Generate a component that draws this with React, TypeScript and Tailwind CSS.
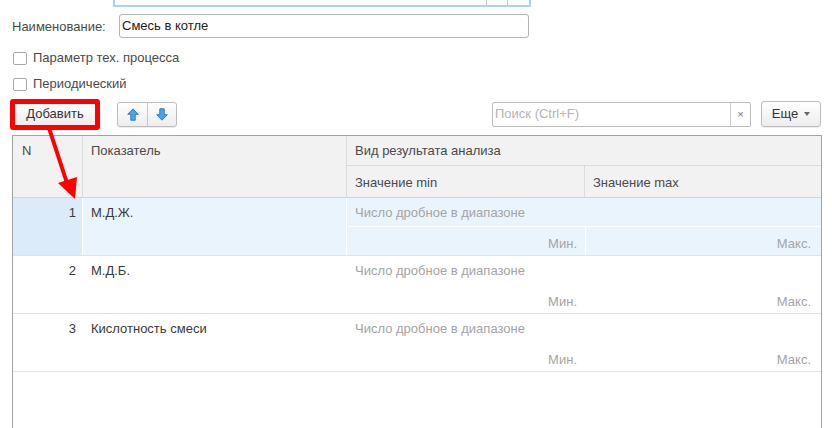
import React from 'react';

const font = { fontFamily: '"Liberation Sans", Arial, sans-serif' };

function Arrow({ down = false }: { down?: boolean }) {
  return (
    <svg width="12" height="13" viewBox="0 0 12 13" className={down ? 'rotate-180' : ''}>
      <path
        d="M6 0.8 L11.3 6.3 L8.2 6.3 L8.2 12.2 L3.8 12.2 L3.8 6.3 L0.7 6.3 Z"
        fill="#4ba4ea"
        stroke="#2b7fc4"
        strokeWidth="1"
        strokeLinejoin="round"
      />
    </svg>
  );
}

function Checkbox({ label }: { label: string }) {
  return (
    <div className="flex items-center h-[26px] pl-[13px]">
      <span className="w-[14px] h-[13px] border border-[#a9a9a9] rounded-[2px] bg-white" />
      <span className="ml-[6px] text-[13px] text-[#4a4a4a]">{label}</span>
    </div>
  );
}

type Row = { n: number; name: string; selected?: boolean };

const rows: Row[] = [
  { n: 1, name: 'М.Д.Ж.', selected: true },
  { n: 2, name: 'М.Д.Б.' },
  { n: 3, name: 'Кислотность смеси' },
];

function DataRow({ row }: { row: Row }) {
  const sel = row.selected;
  const line = sel ? 'border-white' : 'border-transparent';
  return (
    <div
      className={`grid grid-cols-[69px_264px_238px_1fr] h-[58px] border-b border-[#e2e2e2] ${
        sel ? 'bg-[#eaf4fd]' : 'bg-white'
      }`}
    >
      <div className={`text-right pr-[6px] pt-[5px] ${sel ? 'bg-[#dbebfa]' : ''}`}>{row.n}</div>
      <div className={`pl-[8px] pt-[5px] border-l ${line}`}>{row.name}</div>
      <div className={`col-span-2 flex flex-col border-l ${line}`}>
        <div className={`h-[29px] pl-[8px] pt-[5px] text-[#a4a4a4] border-b ${line}`}>
          Число дробное в диапазоне
        </div>
        <div className="flex-1 grid grid-cols-[238px_1fr] text-[#a4a4a4]">
          <div className="text-right pr-[8px] pt-[7px]">Мин.</div>
          <div className={`text-right pr-[10px] pt-[7px] border-l ${line}`}>Макс.</div>
        </div>
      </div>
    </div>
  );
}

export default function App() {
  return (
    <div className="relative w-[832px] h-[428px] overflow-hidden bg-white text-[13px] text-[#3a3a3a]" style={font}>
      {/* cut-off field at the very top */}
      <div className="h-[8px] pl-[113px]">
        <div className="w-[418px] h-[7px] border-2 border-t-0 border-[#a9d3f4] flex justify-end">
          <span className="w-[21px] h-full border-l border-[#c8c8c8]" />
          <span className="w-[22px] h-full border-l border-[#c8c8c8]" />
        </div>
      </div>

      <div className="flex items-center mt-[6px] h-[24px]">
        <span className="w-[119px] pl-[12px] pt-[1px] text-[#4a4a4a]">Наименование:</span>
        <div className="w-[410px] h-[24px] border border-[#b5b5b5] rounded-[3px] flex items-center px-[2px] text-[#222]">
          Смесь в котле
        </div>
      </div>

      <div className="mt-[7px]">
        <Checkbox label="Параметр тех. процесса" />
        <Checkbox label="Периодический" />
      </div>

      {/* toolbar */}
      <div className="flex items-center h-[32px] mt-[1px]">
        <div className="ml-[10px] w-[90px] h-[31px] border-[5px] border-[#ff0000] rounded-[3px] bg-white">
          <div className="h-full flex items-center justify-center bg-gradient-to-b from-white to-[#ececec] text-[#333]">
            Добавить
          </div>
        </div>
        <div className="ml-[17px] flex h-[25px] border border-[#bdbdbd] rounded-[3px] bg-gradient-to-b from-white to-[#ededed] shadow-[0_1px_1px_rgba(0,0,0,0.08)]">
          <div className="w-[29px] flex items-center justify-center">
            <Arrow />
          </div>
          <div className="w-[29px] flex items-center justify-center border-l border-[#c8c8c8]">
            <Arrow down />
          </div>
        </div>
        <div className="ml-auto flex h-[25px] w-[259px] border border-[#bdbdbd] rounded-[2px]">
          <div className="flex-1 flex items-center pl-[2px] text-[#b4b4b4]">Поиск (Ctrl+F)</div>
          <div className="w-[20px] flex items-center justify-center border-l border-[#cfcfcf] text-[#777] text-[11px]">
            ×
          </div>
        </div>
        <div className="ml-[10px] mr-[11px] w-[60px] h-[26px] border border-[#bdbdbd] rounded-[3px] bg-gradient-to-b from-white to-[#ededed] shadow-[0_1px_1px_rgba(0,0,0,0.08)] flex items-center justify-center gap-[6px] text-[#333]">
          Еще
          <span className="w-0 h-0 border-l-[3px] border-r-[3px] border-t-[4px] border-l-transparent border-r-transparent border-t-[#666]" />
        </div>
      </div>

      {/* table */}
      <div className="mt-[5px] ml-[12px] w-[810px] h-[300px] border border-b-0 border-[#a3a3a3]">
        <div className="grid grid-cols-[69px_264px_238px_1fr] grid-rows-[30px_31px] bg-[#f2f2f2] text-[#4a4a4a] border-b border-[#d4d4d4]">
          <div className="row-span-2 pl-[9px] pt-[5px]">N</div>
          <div className="row-span-2 pl-[8px] pt-[5px] border-l border-[#dcdcdc]">Показатель</div>
          <div className="col-span-2 pl-[8px] pt-[5px] border-l border-b border-[#dcdcdc]">
            Вид результата анализа
          </div>
          <div className="pl-[8px] pt-[7px] border-l border-[#dcdcdc]">Значение min</div>
          <div className="pl-[8px] pt-[7px] border-l border-[#dcdcdc]">Значение max</div>
        </div>
        {rows.map((r) => (
          <DataRow key={r.n} row={r} />
        ))}
      </div>

      {/* annotation arrow */}
      <svg className="absolute left-0 top-0 pointer-events-none" width="832" height="428">
        <line x1="49" y1="128" x2="67" y2="183" stroke="#ff0000" strokeWidth="4" />
        <polygon points="58,183 77,177 75,199" fill="#ff0000" />
      </svg>
    </div>
  );
}
